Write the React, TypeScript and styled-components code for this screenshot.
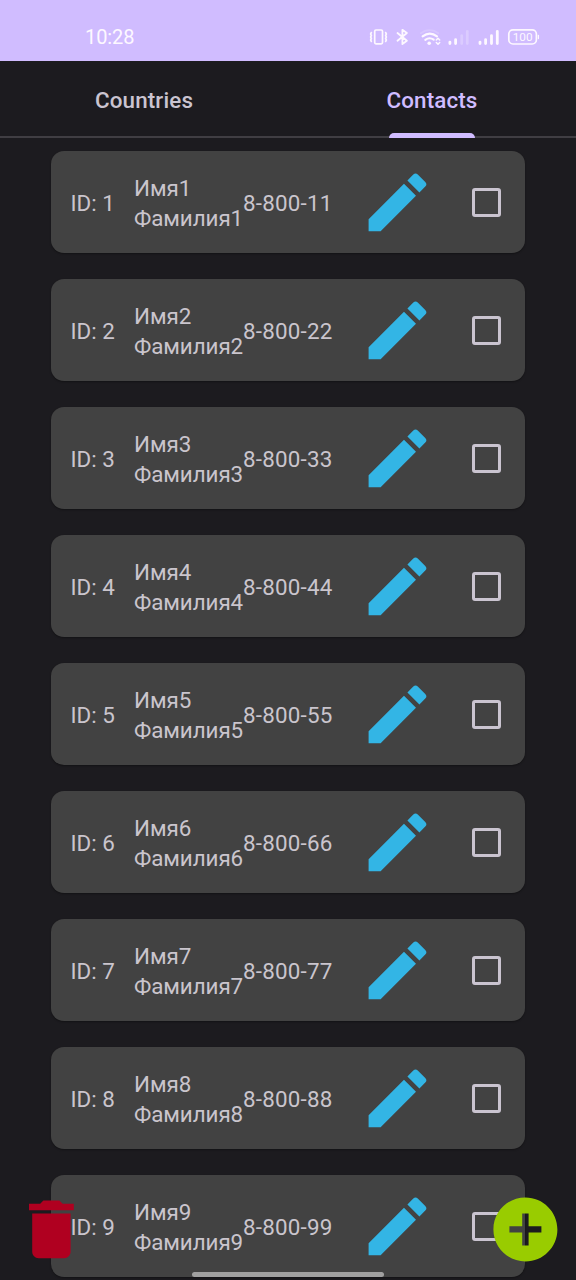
import React from 'react';
import styled, { createGlobalStyle } from 'styled-components';

const GlobalStyle = createGlobalStyle`
  * { box-sizing: border-box; }
  html, body { margin: 0; padding: 0; background: #1c1b1f; }
  body { font-family: Roboto, sans-serif; overflow: hidden; }
`;

const Screen = styled.div`
  position: relative;
  display: flex;
  flex-direction: column;
  width: 576px;
  height: 1280px;
  overflow: hidden;
  background: #1c1b1f;
`;

const StatusBar = styled.header`
  display: flex;
  flex: none;
  align-items: center;
  justify-content: space-between;
  height: 61px;
  padding: 13px 36px 0 85px;
  background: #d0bcff;
  color: #fdf8ff;
`;

const Clock = styled.span`
  font-family: Roboto, sans-serif;
  font-size: 20px;
  line-height: 24px;
  letter-spacing: -0.1px;
`;

const StatusIcons = styled.svg`
  display: block;
  width: 172px;
  height: 22px;
`;

const Tabs = styled.nav`
  display: grid;
  flex: none;
  grid-template-columns: 1fr 1fr;
  height: 77px;
  border-bottom: 2px solid #403e43;
`;

const Tab = styled.div<{ $active?: boolean }>`
  display: flex;
  flex-direction: column;
  align-items: center;
  justify-content: space-between;
  height: 77px;
  padding-top: 23px;
  color: ${(p) => (p.$active ? '#d0bcff' : '#cac4d0')};
  font-size: 22.4px;
  font-weight: 500;
  line-height: 32px;
  letter-spacing: 0.14px;
`;

const Indicator = styled.span`
  width: 86px;
  height: 5px;
  border-radius: 5px 5px 0 0;
  background: #d0bcff;
`;

const List = styled.main`
  display: flex;
  flex: none;
  flex-direction: column;
  gap: 26px;
  padding: 13px 51px 0;
`;

const Card = styled.article`
  display: grid;
  flex: none;
  grid-template-columns: 63.5px 109px 115.5px 77px 1fr;
  align-items: center;
  height: 102px;
  padding: 0 0 0 19.5px;
  border-radius: 13px;
  background: #424242;
  box-shadow: 0 1px 2px rgba(0, 0, 0, 0.35);
  color: #cac5cd;
  font-size: 22.4px;
  line-height: 30px;
`;

const Cell = styled.span<{ $spacing?: number }>`
  padding-top: 2px;
  letter-spacing: ${(p) => p.$spacing ?? 0}px;
  white-space: nowrap;
`;

const Icon = styled.svg`
  display: block;
  width: 76.8px;
  height: 76.8px;
`;

const Checkbox = styled.span`
  justify-self: end;
  width: 29px;
  height: 29px;
  margin-right: 24px;
  border: 3px solid #cac4d0;
  border-radius: 3px;
`;

const DeleteButton = styled.button`
  position: absolute;
  left: 13px;
  bottom: 12.4px;
  padding: 0;
  border: 0;
  background: none;
`;

const AddButton = styled(DeleteButton)`
  left: auto;
  right: 12.4px;
`;

const GestureBar = styled.div`
  position: absolute;
  left: 192px;
  bottom: 3px;
  width: 192px;
  height: 5px;
  border-radius: 3px;
  background: #a0a0a0;
`;

const contacts = [1, 2, 3, 4, 5, 6, 7, 8, 9].map((id) => ({
  id,
  name: `Имя${id}`,
  surname: `Фамилия${id}`,
  phone: `8-800-${id}${id}`,
}));

function StatusGlyphs() {
  return (
    <StatusIcons viewBox="368 26 172 22" fill="none" stroke="#fdf8ff" strokeLinecap="round" strokeLinejoin="round">
      <rect x="374.7" y="30" width="7.8" height="13.8" rx="1.3" strokeWidth="1.7" />
      <path d="M371.4 32.5l-.8 1.5.8 1.5-.8 1.5.8 1.5-.8 1.5.8 1.5M385.6 32.5l.8 1.5-.8 1.5.8 1.5-.8 1.5.8 1.5-.8 1.5" strokeWidth="1.6" />
      <path d="M397.5 33l9.4 7.8-4.5 3.3V29.8l4.5 3.2-9.4 7.8" strokeWidth="1.8" />
      <path d="M420.8 33.3c5.3-4.2 12.3-4.2 17.6 0" strokeWidth="1.8" opacity=".18" />
      <path d="M422.6 36.4c4.6-3.6 9.8-3.6 14.4 0M425.3 39.9c2.9-2.1 5.7-2.1 8.4-.2" strokeWidth="2.1" />
      <circle cx="429.2" cy="43.2" r="1.8" fill="#fdf8ff" stroke="none" />
      <path d="M436.3 40l1.7-1.8 1.7 1.8M436.3 42.5l1.7 1.8 1.7-1.8" strokeWidth="1.5" />
      <g strokeWidth="2.8">
        <path d="M449.9 42.1v1.4M455.6 39.6v3.9" />
        <path d="M461.7 35.6v7.9M467.3 31.3v12.2" opacity=".25" />
        <path d="M480 42.1v1.4M485.6 39.6v3.9M491.5 35.6v7.9M497.3 31.3v12.2" />
      </g>
      <rect x="508.8" y="29.8" width="27.6" height="14.2" rx="4.2" strokeWidth="1.7" />
      <path d="M538.4 35.5v3" strokeWidth="1.3" />
      <text x="522.6" y="41.2" textAnchor="middle" fill="#fdf8ff" stroke="none" fontFamily="Roboto, sans-serif" fontSize="11.8">
        100
      </text>
    </StatusIcons>
  );
}

function PencilIcon() {
  return (
    <Icon viewBox="0 0 24 24" fill="#33b5e5">
      <path d="M3 17.25V21h3.75L17.81 9.94l-3.75-3.75L3 17.25zM20.71 7.04a.996.996 0 0 0 0-1.41l-2.34-2.34a.996.996 0 0 0-1.41 0l-1.83 1.83 3.75 3.75 1.83-1.83z" />
    </Icon>
  );
}

export default function App() {
  return (
    <Screen>
      <GlobalStyle />
      <StatusBar>
        <Clock>10:28</Clock>
        <StatusGlyphs />
      </StatusBar>
      <Tabs>
        <Tab>Countries</Tab>
        <Tab $active>
          Contacts
          <Indicator />
        </Tab>
      </Tabs>
      <List>
        {contacts.map((c) => (
          <Card key={c.id}>
            <Cell>ID: {c.id}</Cell>
            <Cell $spacing={-0.08}>
              {c.name}
              <br />
              {c.surname}
            </Cell>
            <Cell $spacing={0.2}>{c.phone}</Cell>
            <PencilIcon />
            <Checkbox />
          </Card>
        ))}
      </List>
      <DeleteButton aria-label="Delete">
        <Icon viewBox="0 0 24 24" fill="#b00020">
          <path d="M6 19c0 1.1.9 2 2 2h8c1.1 0 2-.9 2-2V7H6v12zM19 4h-3.5l-1-1h-5l-1 1H5v2h14V4z" />
        </Icon>
      </DeleteButton>
      <AddButton aria-label="Add">
        <Icon viewBox="0 0 24 24" fill="#99cc00">
          <path d="M12 2C6.48 2 2 6.48 2 12s4.48 10 10 10 10-4.48 10-10S17.52 2 12 2zm5 11h-4v4h-2v-4H7v-2h4V7h2v4h4v2z" />
        </Icon>
      </AddButton>
      <GestureBar />
    </Screen>
  );
}
